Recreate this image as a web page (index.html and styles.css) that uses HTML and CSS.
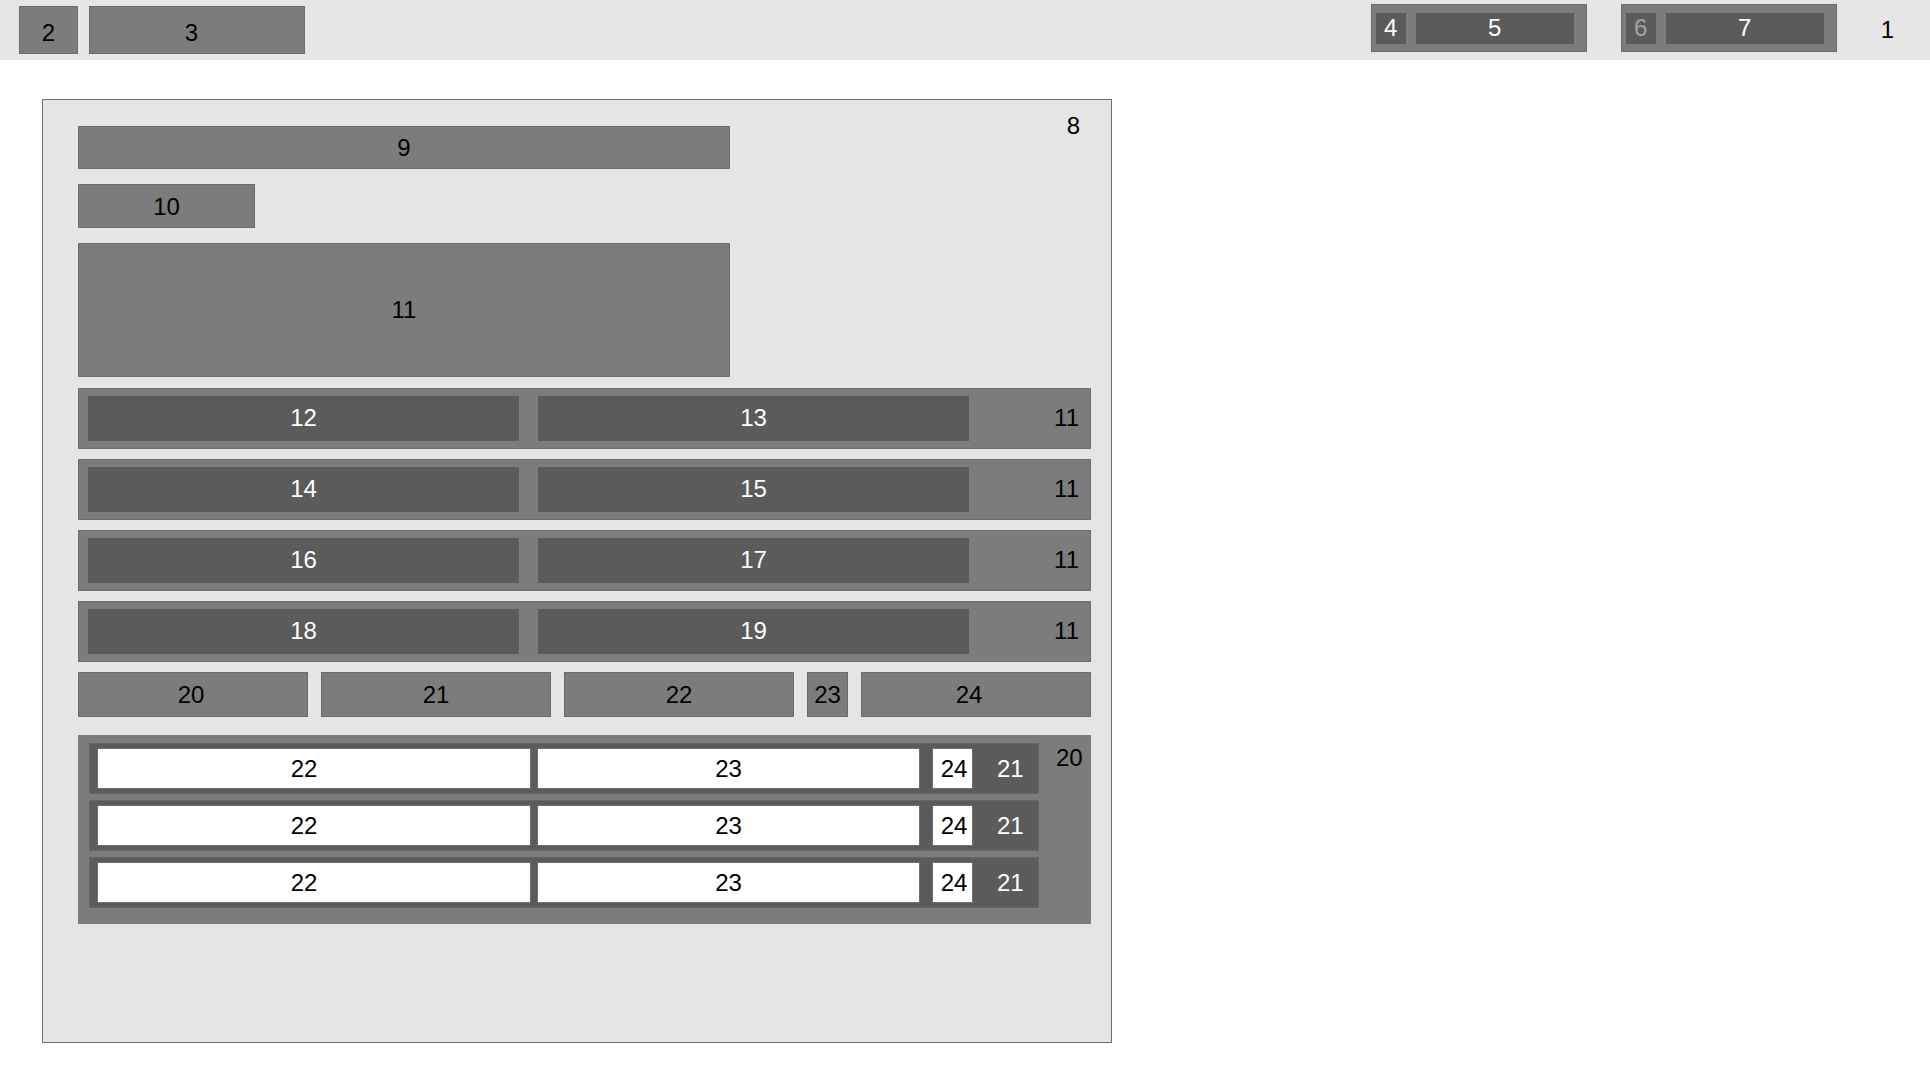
FILE: index.html
```html
<!DOCTYPE html>
<html>
<head>
<meta charset="utf-8">
<title>Layout</title>
<link rel="stylesheet" href="styles.css">
</head>
<body>
<header class="topbar">
  <div class="left-group">
    <div class="box mid b2">2</div>
    <div class="box mid b3">3</div>
  </div>
  <div class="right-group">
    <div class="pair">
      <div class="box dark small">4</div>
      <div class="box dark wide">5</div>
    </div>
    <div class="pair">
      <div class="box dark small muted">6</div>
      <div class="box dark wide">7</div>
    </div>
    <span class="top-label">1</span>
  </div>
</header>

<main class="panel">
  <span class="panel-label">8</span>
  <div class="content">
    <div class="box mid b9">9</div>
    <div class="box mid b10">10</div>
    <div class="box mid b11">11</div>

    <div class="row">
      <div class="box dark cell">12</div>
      <div class="box dark cell">13</div>
      <span class="row-label">11</span>
    </div>
    <div class="row">
      <div class="box dark cell">14</div>
      <div class="box dark cell">15</div>
      <span class="row-label">11</span>
    </div>
    <div class="row">
      <div class="box dark cell">16</div>
      <div class="box dark cell">17</div>
      <span class="row-label">11</span>
    </div>
    <div class="row">
      <div class="box dark cell">18</div>
      <div class="box dark cell">19</div>
      <span class="row-label">11</span>
    </div>

    <div class="tabs">
      <div class="box mid tab first">20</div>
      <div class="box mid tab">21</div>
      <div class="box mid tab">22</div>
      <div class="box mid tab narrow">23</div>
      <div class="box mid tab last">24</div>
    </div>

    <div class="list">
      <div class="list-rows">
        <div class="item">
          <div class="box white f22">22</div>
          <div class="box white f23">23</div>
          <div class="box white f24">24</div>
          <span class="item-label">21</span>
        </div>
        <div class="item">
          <div class="box white f22">22</div>
          <div class="box white f23">23</div>
          <div class="box white f24">24</div>
          <span class="item-label">21</span>
        </div>
        <div class="item">
          <div class="box white f22">22</div>
          <div class="box white f23">23</div>
          <div class="box white f24">24</div>
          <span class="item-label">21</span>
        </div>
      </div>
      <span class="list-label">20</span>
    </div>
  </div>
</main>
</body>
</html>
```

FILE: styles.css
```css
* {
  box-sizing: border-box;
}

html, body {
  margin: 0;
  padding: 0;
  background: #ffffff;
}

body {
  font-family: "Liberation Sans", Arial, sans-serif;
  font-size: 24px;
  color: #000000;
  line-height: 28px;
}

.box {
  display: flex;
  align-items: center;
  justify-content: center;
}

.mid {
  background: #7c7c7c;
  border: 1px solid #6c6c6c;
  color: #000000;
}

.dark {
  background: #5b5b5b;
  color: #ffffff;
}

.white {
  background: #ffffff;
  border: 1px solid #6e6e6e;
  color: #000000;
}

/* top bar */
.topbar {
  height: 60px;
  background: #e6e6e6;
  display: flex;
  align-items: flex-start;
  justify-content: space-between;
}

.left-group {
  display: flex;
  gap: 11px;
  margin-top: 6px;
  margin-left: 19px;
}

.b2 {
  width: 59px;
  height: 48px;
  padding-top: 6px;
}

.b3 {
  width: 216px;
  height: 48px;
  padding-top: 6px;
  padding-right: 11px;
}

.right-group {
  display: flex;
  align-items: flex-start;
  gap: 34px;
  margin-top: 4px;
}

.pair {
  display: flex;
  align-items: center;
  gap: 10px;
  width: 216px;
  height: 48px;
  padding: 0 11px 0 4px;
  background: #7c7c7c;
  border: 1px solid #6c6c6c;
}

.small {
  width: 30px;
  height: 31px;
}

.wide {
  width: 158px;
  height: 31px;
}

.muted {
  color: #a4a4a4;
}

.top-label {
  margin-left: 10px;
  margin-right: 36px;
  margin-top: 12px;
}

/* main panel */
.panel {
  position: relative;
  width: 1070px;
  height: 944px;
  margin: 39px 0 0 42px;
  padding: 26px 20px 0 35px;
  background: #e5e5e5;
  border: 1px solid #6e6e6e;
}

.panel-label {
  position: absolute;
  top: 12px;
  right: 31px;
}

.content {
  display: flex;
  flex-direction: column;
  align-items: flex-start;
  width: 1013px;
}

.b9 {
  width: 652px;
  height: 43px;
  margin-bottom: 15px;
}

.b10 {
  width: 177px;
  height: 44px;
  margin-bottom: 15px;
  padding-top: 2px;
}

.b11 {
  width: 652px;
  height: 134px;
  margin-bottom: 11px;
}

.row {
  display: flex;
  align-items: center;
  gap: 19px;
  width: 1013px;
  height: 61px;
  margin-bottom: 10px;
  padding: 0 11px 1px 9px;
  background: #7c7c7c;
  border: 1px solid #6c6c6c;
}

.cell {
  width: 431px;
  height: 45px;
}

.row-label {
  margin-left: auto;
}

.tabs {
  display: flex;
  gap: 13px;
  width: 1013px;
  height: 45px;
  margin-bottom: 18px;
}

.tab {
  flex: 0 0 230px;
  height: 45px;
}

.tab.narrow {
  flex: 0 0 41px;
}

.tab.first {
  padding-right: 4px;
}

.tab.last {
  padding-right: 14px;
}

.list {
  display: flex;
  align-items: flex-start;
  width: 1013px;
  height: 189px;
  padding: 8px 0 0 11px;
  background: #7c7c7c;
}

.list-rows {
  display: flex;
  flex-direction: column;
  gap: 6px;
  width: 950px;
}

.item {
  display: flex;
  align-items: center;
  height: 51px;
  padding: 0 0 0 7px;
  background: #5b5b5b;
  border: 1px solid #656565;
}

.f22 {
  width: 434px;
  height: 41px;
  padding-right: 20px;
}

.f23 {
  width: 383px;
  height: 41px;
  margin-left: 6px;
}

.f24 {
  width: 41px;
  height: 41px;
  margin-left: 12px;
  padding-left: 3px;
}

.item-label {
  color: #ffffff;
  margin-left: 24px;
}

.list-label {
  margin-left: 17px;
  margin-top: 1px;
}
```
